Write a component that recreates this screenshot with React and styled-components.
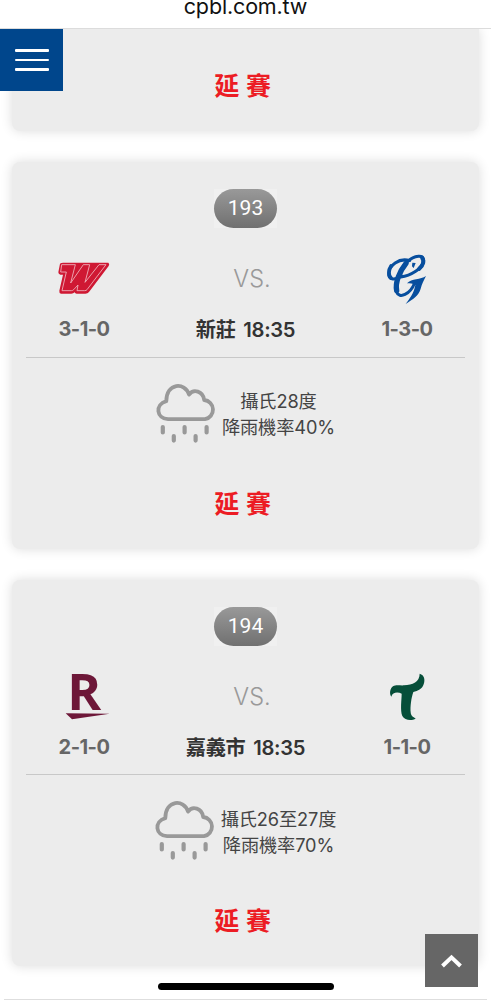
import styled, { createGlobalStyle } from "styled-components";

const GlobalStyle = createGlobalStyle`
  * {
    box-sizing: border-box;
  }

  body {
    margin: 0;
    background-color: #fff;
    font-family: "Inter", "Noto Sans CJK TC", sans-serif;
    overflow: hidden;
  }
`;

const Container = styled.div`
  position: relative;
  width: 100%;
  height: 1000px;
  display: flex;
  flex-direction: column;
  overflow: hidden;
`;

const AddressBar = styled.div`
  flex: none;
  height: 29px;
  border-bottom: 1px solid #dcdcdc;
  text-align: center;
  font-size: 21.5px;
  line-height: 13px;
  letter-spacing: -0.15px;
  color: #111;
`;

const GameList = styled.div`
  flex: 1;
  min-height: 0;
  overflow: hidden;
  display: flex;
  flex-direction: column;
  gap: 31px;
  padding: 0 12px;
`;

const Card = styled.div`
  flex: none;
  height: ${(props) => (props.$cut ? "102px" : "386.5px")};
  display: flex;
  flex-direction: column;
  align-items: center;
  padding: ${(props) => (props.$cut ? "0 14px 26px" : "27px 14px 26px")};
  border-radius: ${(props) => (props.$cut ? "0 0 8px 8px" : "8px")};
  background-color: #ececec;
  box-shadow: 0 0 12px rgba(0, 0, 0, 0.14);
`;

const GameNumberBox = styled.div`
  flex: none;
  background-color: #f0f0f0;
`;

const GameNumber = styled.div`
  width: 63px;
  height: 39px;
  border-radius: 20px;
  background: linear-gradient(#999, #707070);
  font-family: "Roboto", sans-serif;
  font-size: 21px;
  line-height: 39px;
  text-align: center;
  color: #fff;
`;

const Match = styled.div`
  width: 100%;
  height: 129.5px;
  flex: none;
  padding-top: 23px;
  display: grid;
  grid-template-columns: 116px 1fr 116px;
  border-bottom: 1px solid #c8c8c8;
`;

const Column = styled.div`
  display: flex;
  flex-direction: column;
  align-items: center;
`;

const LogoBox = styled.div`
  height: 56px;
  display: flex;
  align-items: center;

  svg {
    display: block;
    overflow: visible;
  }
`;

const Versus = styled.div`
  height: 56px;
  padding-left: 13px;
  font-family: "Inter", sans-serif;
  font-weight: 300;
  font-size: 23.5px;
  line-height: 56px;
  color: #999;
`;

const Score = styled.div`
  font-size: 20px;
  font-weight: 700;
  line-height: 44px;
  letter-spacing: -0.5px;
  color: #666;
`;

const Place = styled.div`
  font-size: 20.2px;
  font-weight: 600;
  line-height: 46px;
  letter-spacing: -0.3px;
  word-spacing: 3px;
  color: #333;
  white-space: pre;
`;

const Weather = styled.div`
  flex: none;
  height: 60px;
  margin-top: 26.5px;
  display: flex;
  align-items: center;
  gap: 6px;

  svg {
    display: block;
    margin-top: -3px;
  }
`;

const WeatherText = styled.div`
  font-size: 18.2px;
  line-height: 26px;
  letter-spacing: -0.1px;
  text-align: center;
  color: #444;
`;

const Status = styled.div`
  margin-top: auto;
  padding-left: 1px;
  font-size: 25px;
  font-weight: 700;
  line-height: 37px;
  letter-spacing: 6.5px;
  color: #ec1c24;
`;

const MenuButton = styled.button`
  position: absolute;
  top: 29px;
  left: 0;
  width: 63px;
  height: 62px;
  border: 0;
  padding: 0;
  display: flex;
  flex-direction: column;
  justify-content: center;
  align-items: center;
  gap: 6.5px;
  background-color: #00468c;
`;

const MenuLine = styled.span`
  width: 34px;
  height: 2.7px;
  border-radius: 1px;
  background-color: #fff;
`;

const TopButton = styled.button`
  position: absolute;
  left: 425px;
  top: 934px;
  width: 53px;
  height: 53px;
  border: 0;
  padding: 0;
  display: flex;
  justify-content: center;
  align-items: center;
  background-color: #666;
`;

const HomeIndicator = styled.div`
  position: absolute;
  left: 158px;
  bottom: 10.5px;
  width: 176px;
  height: 6.5px;
  border-radius: 4px;
  background-color: #000;
`;

const BottomLine = styled.div`
  position: absolute;
  left: 4px;
  right: 4px;
  bottom: 0;
  height: 1px;
  background-color: #dedede;
`;

const DragonsLogo = () => (
  <svg width="56" height="38" viewBox="0 3 168 114">
    <path
      fill="#cf1833"
      d="M12 14Q15 11 22 11H157Q162 15 158 21L99 99Q95 104 88 104H62Q57 104 56 100Q52 104 46 104H15Q9 103 10 95L21 47H13Q7 46 7 40Z"
    />
    <path
      fill="none"
      stroke="#f0b4bd"
      strokeWidth="2.6"
      strokeLinejoin="round"
      d="M17 17H58L44 72L82 17H101L87 70L129 17H150L93 92Q91 95 86 95H63L66 78L53 92Q50 95 46 95H18L31 39H14Z"
    />
  </svg>
);

const GuardiansLogo = () => (
  <svg width="48" height="56" viewBox="-4 2 144 168">
    <g fill="none" stroke="#074e9e" strokeLinecap="round">
      <path d="M76 31C43 21 14 47 13 70C12 91 34 90 51 76" strokeWidth="9" />
      <path d="M20 47C12 58 12 76 20 83" strokeWidth="11" />
      <path
        d="M49 80C79 76 116 54 118 32C121 10 89 15 69 34C47 56 27 101 36 124C45 148 78 131 91 98"
        strokeWidth="9"
      />
      <path d="M65 39C45 64 32 97 37 121" strokeWidth="16" />
      <path d="M113 22C121 33 115 46 104 56" strokeWidth="12" />
    </g>
    <path
      fill="#074e9e"
      d="M68 99C82 83 109 89 125 77C118 90 113 101 109 115C103 137 86 146 64 161C76 144 88 131 93 104C85 99 77 99 68 99Z"
    />
    <path fill="#074e9e" d="M84 37L94 38L88 53L83 48Z" />
  </svg>
);

const MonkeysLogo = () => (
  <svg width="48" height="50" viewBox="59 38 144 150">
    <text
      x="81"
      y="152"
      textLength="102"
      lengthAdjust="spacingAndGlyphs"
      fontFamily="Open Sans, sans-serif"
      fontWeight="700"
      fontSize="153"
      fill="#6d1738"
    >
      R
    </text>
    <path fill="#6d1738" d="M76 162L208 163L95 180Z" />
  </svg>
);

const HawksLogo = () => (
  <svg width="38" height="50" viewBox="84 36 114 150">
    <path
      fill="#064e39"
      d="M94 110C88 103 89 86 99 79C108 73 119 77 132 76C158 74 179 66 179 41C193 45 196 59 191 73C186 88 174 93 160 96C154 112 150 141 152 157C153 170 161 171 167 176C155 183 134 182 127 168C120 151 125 119 125 101C114 95 97 96 94 110Z"
    />
  </svg>
);

const RainIcon = () => (
  <svg
    width="60"
    height="60"
    viewBox="0 0 60 60"
    fill="none"
    stroke="#999"
    strokeLinecap="round"
    strokeLinejoin="round"
  >
    <path
      strokeWidth="3.8"
      d="M12 36.2H49A9.7 9.7 0 0 0 48.2 17C47 8 37.5 5.6 33 11.5C29 -1.2 10.5 -0.6 10.3 18.2C-1.5 21.5 .5 35.6 12 36.2Z"
    />
    <path strokeWidth="4.2" d="M6.8 44V49.4M28.6 44V49.4M50.6 44V49.4M17.8 53V57.6M39.6 53V57.6" />
  </svg>
);

const games = [
  {
    number: 193,
    away: <DragonsLogo />,
    home: <GuardiansLogo />,
    awayScore: "3-1-0",
    homeScore: "1-3-0",
    place: "新莊 18:35",
    temperature: "攝氏28度",
    rain: "降雨機率40%",
  },
  {
    number: 194,
    away: <MonkeysLogo />,
    home: <HawksLogo />,
    awayScore: "2-1-0",
    homeScore: "1-1-0",
    place: "嘉義市 18:35",
    temperature: "攝氏26至27度",
    rain: "降雨機率70%",
  },
];

const GameCard = ({ game }) => (
  <Card>
    <GameNumberBox>
      <GameNumber>{game.number}</GameNumber>
    </GameNumberBox>
    <Match>
      <Column>
        <LogoBox>{game.away}</LogoBox>
        <Score>{game.awayScore}</Score>
      </Column>
      <Column>
        <Versus>VS.</Versus>
        <Place>{game.place}</Place>
      </Column>
      <Column>
        <LogoBox>{game.home}</LogoBox>
        <Score>{game.homeScore}</Score>
      </Column>
    </Match>
    <Weather>
      <RainIcon />
      <WeatherText>
        {game.temperature}
        <br />
        {game.rain}
      </WeatherText>
    </Weather>
    <Status>延賽</Status>
  </Card>
);

export default function App() {
  return (
    <>
      <GlobalStyle />
      <Container>
        <AddressBar>cpbl.com.tw</AddressBar>
        <GameList>
          <Card $cut>
            <Status>延賽</Status>
          </Card>
          {games.map((game) => (
            <GameCard key={game.number} game={game} />
          ))}
        </GameList>
        <MenuButton>
          <MenuLine />
          <MenuLine />
          <MenuLine />
        </MenuButton>
        <TopButton>
          <svg width="22" height="14" viewBox="0 0 22 14" fill="none" stroke="#fff" strokeWidth="4">
            <path d="M1.5 12L10.5 3.4L19.5 12" />
          </svg>
        </TopButton>
        <HomeIndicator />
        <BottomLine />
      </Container>
    </>
  );
}
